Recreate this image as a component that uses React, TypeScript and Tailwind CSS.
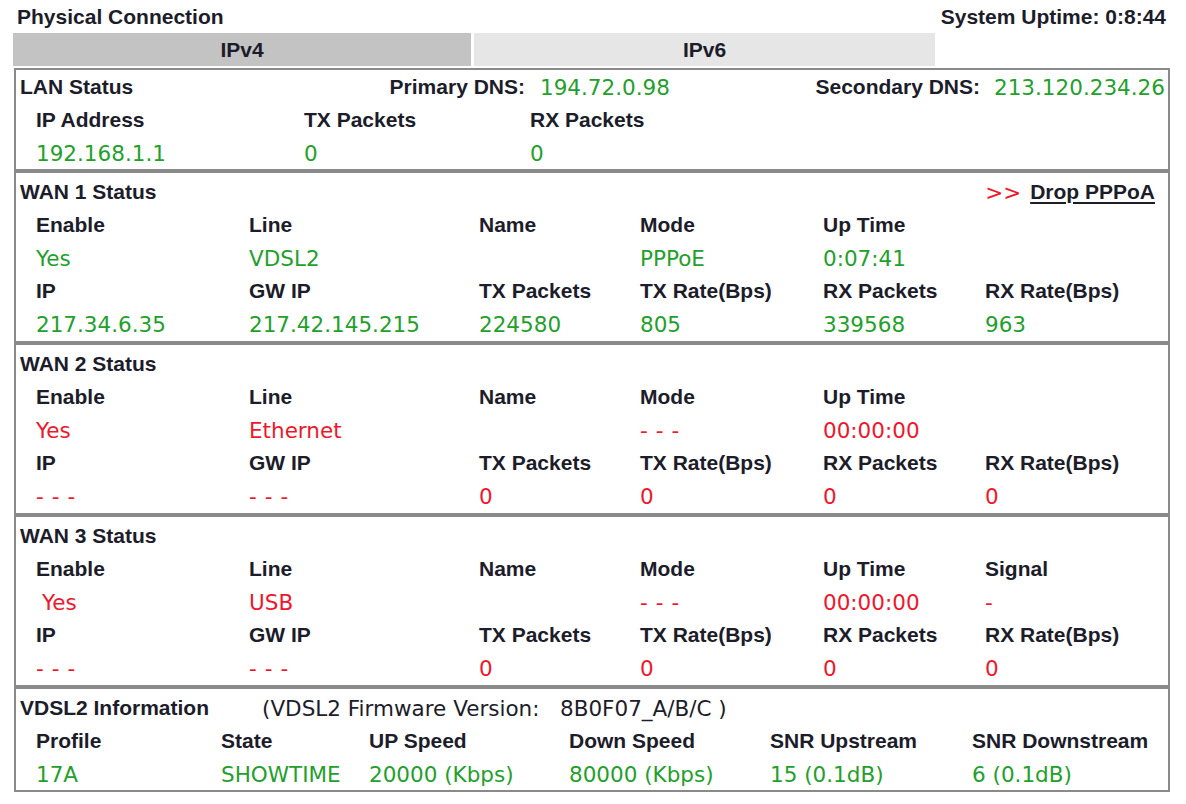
import React from 'react'

const label = "font-['Liberation_Sans',Arial,sans-serif] font-bold text-[21px] text-[#1c1c2a] pt-px"
const value = "font-['DejaVu_Sans',Verdana,sans-serif] text-[21.5px] pt-[3px]"
const green = 'text-[#23a02c]'
const red = 'text-[#f0162c]'

type Cell = { text: string; cls?: string }

const wanCols = 'grid grid-cols-[213px_230px_161px_183px_162px_1fr] pl-5'

function Row({ cells, isLabel, color }: { cells: Cell[]; isLabel?: boolean; color?: string }) {
  return (
    <div className={wanCols}>
      {cells.map((c, i) => (
        <div
          key={i}
          className={`h-[33px] flex items-center whitespace-pre ${isLabel ? label : `${value} ${color}`} ${c.cls ?? ''}`}
        >
          {c.text}
        </div>
      ))}
    </div>
  )
}

function WanBox({
  title,
  right,
  vals1,
  vals2,
  color,
  extraLabel,
}: {
  title: string
  right?: React.ReactNode
  vals1: Cell[]
  vals2: Cell[]
  color: string
  extraLabel?: string
}) {
  const labels1 = ['Enable', 'Line', 'Name', 'Mode', 'Up Time']
  if (extraLabel) labels1.push(extraLabel)
  const labels2 = ['IP', 'GW IP', 'TX Packets', 'TX Rate(Bps)', 'RX Packets', 'RX Rate(Bps)']
  return (
    <div className="border-2 border-[#8a8a8a] pt-[2px] pb-[1px]">
      <div className="h-[33px] flex items-center justify-between pl-1 pr-[13px]">
        <span className={label}>{title}</span>
        {right}
      </div>
      <Row cells={labels1.map((t) => ({ text: t }))} isLabel />
      <Row cells={vals1} color={color} />
      <Row cells={labels2.map((t) => ({ text: t }))} isLabel />
      <Row cells={vals2} color={color} />
    </div>
  )
}

export default function App() {
  const c = (t: string, cls?: string) => ({ text: t, cls })
  const dash = c('---', 'tracking-[8px]')
  return (
    <div className="w-[1186px] h-[804px] bg-white overflow-hidden">
      <div className="ml-[13px] w-[1157px]">
        {/* header */}
        <div className="h-[33px] flex items-center justify-between pl-[4px] pr-[4px]">
          <span className={label}>Physical Connection</span>
          <span className={label}>System Uptime: 0:8:44</span>
        </div>

        {/* tabs */}
        <div className="flex h-[33px] gap-[3px]">
          <div className={`w-[458px] bg-[#c3c3c3] flex items-center justify-center ${label}`}>IPv4</div>
          <div className={`w-[461px] bg-[#e6e6e6] flex items-center justify-center ${label}`}>IPv6</div>
        </div>

        <div className="mt-[2px] ml-px">
          {/* LAN */}
          <div className="border-2 border-[#8a8a8a]">
            <div className="h-[33px] flex items-center">
              <div className="w-[509px] flex justify-between pl-1">
                <span className={label}>LAN Status</span>
                <span className={label}>Primary DNS:</span>
              </div>
              <div className="ml-[15px] w-[440px] flex justify-between items-center">
                <span className={`${value} ${green}`}>194.72.0.98</span>
                <span className={label}>Secondary DNS:</span>
              </div>
              <span className={`ml-[14px] ${value} ${green}`}>213.120.234.26</span>
            </div>
            <div className="grid grid-cols-[268px_226px_1fr] pl-5">
              <div className={`h-[33px] flex items-center ${label}`}>IP Address</div>
              <div className={`h-[33px] flex items-center ${label}`}>TX Packets</div>
              <div className={`h-[33px] flex items-center ${label}`}>RX Packets</div>
              <div className={`h-[33px] flex items-center ${value} ${green}`}>192.168.1.1</div>
              <div className={`h-[33px] flex items-center ${value} ${green}`}>0</div>
              <div className={`h-[33px] flex items-center ${value} ${green}`}>0</div>
            </div>
          </div>

          <WanBox
            title="WAN 1 Status"
            color={green}
            right={
              <span className="flex items-center gap-[9px]">
                <span className={`${value} ${red} text-[18px]`}>&gt;&gt;</span>
                <span className={`${label} underline underline-offset-[3px] decoration-[2px]`}>Drop PPPoA</span>
              </span>
            }
            vals1={[c('Yes'), c('VDSL2'), c(''), c('PPPoE'), c('0:07:41')]}
            vals2={[c('217.34.6.35'), c('217.42.145.215'), c('224580'), c('805'), c('339568'), c('963')]}
          />
          <WanBox
            title="WAN 2 Status"
            color={red}
            vals1={[c('Yes'), c('Ethernet'), c(''), dash, c('00:00:00')]}
            vals2={[dash, dash, c('0'), c('0'), c('0'), c('0')]}
          />
          <WanBox
            title="WAN 3 Status"
            color={red}
            extraLabel="Signal"
            vals1={[c('Yes', 'pl-[6px]'), c('USB'), c(''), dash, c('00:00:00'), c('-')]}
            vals2={[dash, dash, c('0'), c('0'), c('0'), c('0')]}
          />

          {/* VDSL2 */}
          <div className="border-2 border-[#8a8a8a] pt-[2px]">
            <div className="h-[33px] flex items-center pl-1">
              <span className={`${label} w-[242px]`}>VDSL2 Information</span>
              <span className={`${value} text-[#1c1c2a] w-[298px]`}>(VDSL2 Firmware Version:</span>
              <span className={`${value} text-[#1c1c2a]`}>8B0F07_A/B/C )</span>
            </div>
            <div className="grid grid-cols-[185px_148px_200px_201px_202px_1fr] pl-5">
              {['Profile', 'State', 'UP Speed', 'Down Speed', 'SNR Upstream', 'SNR Downstream'].map((t) => (
                <div key={t} className={`h-[33px] flex items-center ${label}`}>
                  {t}
                </div>
              ))}
              {['17A', 'SHOWTIME', '20000 (Kbps)', '80000 (Kbps)', '15 (0.1dB)', '6 (0.1dB)'].map((t) => (
                <div key={t} className={`h-[33px] flex items-center whitespace-pre ${value} ${green}`}>
                  {t}
                </div>
              ))}
            </div>
          </div>
        </div>
      </div>
    </div>
  )
}
